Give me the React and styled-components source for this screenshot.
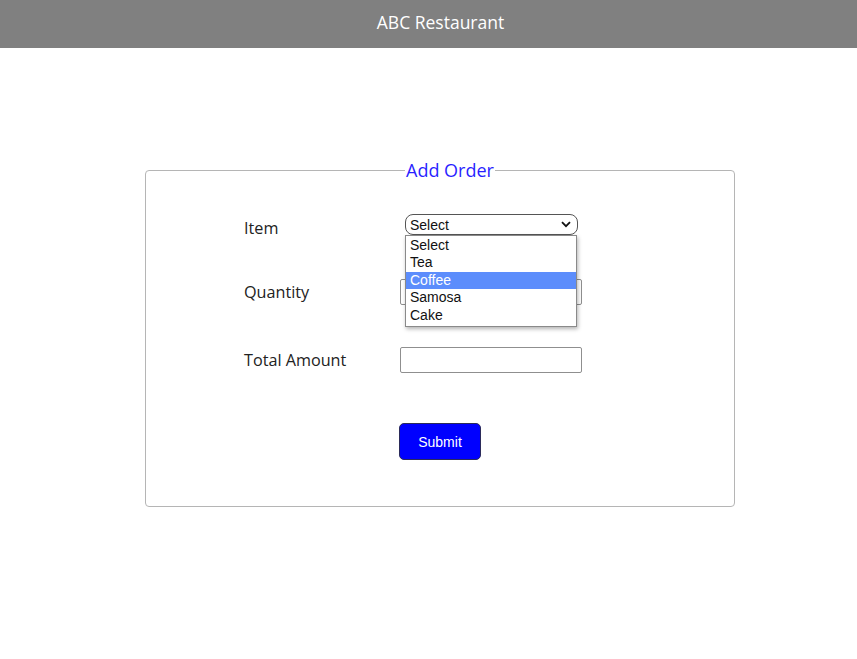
import React from "react";
import styled, { createGlobalStyle } from "styled-components";

const GlobalStyle = createGlobalStyle`
  html, body { margin: 0; padding: 0; background: #fff; }
  body { font-family: "Open Sans", "Noto Sans", sans-serif; }
`;

const Header = styled.header`
  height: 48px;
  box-sizing: border-box;
  background: #808080;
  color: #fff;
  display: flex;
  align-items: center;
  justify-content: center;
  padding: 0 0 5px 24px;
  font-size: 17.5px;
`;

const Main = styled.main`
  padding-top: 110px;
`;

const Fieldset = styled.fieldset`
  margin: 0 0 0 145px;
  width: 590px;
  box-sizing: border-box;
  border: 1px solid #b5b5b5;
  border-radius: 4px;
  padding: 0 0 46px 0;
`;

const Legend = styled.legend`
  margin-left: 259px;
  padding: 0 1px;
  color: #2a1fff;
  font-size: 18px;
  line-height: 24px;
`;

const FormGrid = styled.div`
  display: grid;
  grid-template-columns: 156px 190px;
  grid-template-rows: 26px 26px 26px 45px;
  row-gap: 42px;
  align-items: center;
  margin: 29px 0 0 98px;
`;

const Label = styled.label`
  font-size: 16.2px;
  color: #222;
  margin-top: ${(p) => p.$offset || 0}px;
`;

const Field = styled.div`
  position: relative;
  display: flex;
  align-items: center;
  height: 26px;
`;

const SelectBox = styled.div`
  box-sizing: border-box;
  margin-left: 5px;
  margin-top: 1px;
  width: 173px;
  height: 21px;
  border: 1px solid #555;
  border-radius: 8px;
  display: flex;
  align-items: center;
  justify-content: space-between;
  padding: 0 6px 0 4px;
  font-family: "Liberation Sans", Arial, sans-serif;
  font-size: 14px;
  color: #111;
`;

const DropList = styled.ul`
  position: absolute;
  top: 24px;
  left: 5px;
  width: 172px;
  box-sizing: border-box;
  margin: 0;
  padding: 1px 0 2px;
  list-style: none;
  background: #fff;
  border: 1px solid #8a8a8a;
  box-shadow: 1px 2px 4px rgba(0, 0, 0, 0.3);
  z-index: 5;
`;

const Option = styled.li`
  height: 17.4px;
  line-height: 17px;
  padding: 0 4px;
  font-family: "Liberation Sans", Arial, sans-serif;
  font-size: 14px;
  color: ${(p) => (p.$active ? "#fff" : "#111")};
  background: ${(p) => (p.$active ? "#5c8dfc" : "transparent")};
`;

const TextInput = styled.input`
  box-sizing: border-box;
  width: 182px;
  height: 26px;
  border: 1px solid #8f8f8f;
  border-radius: 2px;
  padding: 0 4px;
  font-family: "Liberation Sans", Arial, sans-serif;
  font-size: 14px;
  outline: none;
`;

const ButtonRow = styled.div`
  grid-column: 2;
  align-self: end;
  height: 37px;
`;

const SubmitButton = styled.button`
  width: 82px;
  height: 37px;
  background: #0000ff;
  color: #fff;
  border: 1px solid #2b2b5a;
  border-radius: 5px;
  font-family: "Liberation Sans", Arial, sans-serif;
  font-size: 14px;
  margin-left: -1px;
  cursor: pointer;
`;

const options = ["Select", "Tea", "Coffee", "Samosa", "Cake"];

export default function App() {
  return (
    <>
      <GlobalStyle />
      <Header>ABC Restaurant</Header>
      <Main>
        <Fieldset>
          <Legend>Add Order</Legend>
          <FormGrid>
            <Label $offset={7}>Item</Label>
            <Field>
              <SelectBox>
                <span>Select</span>
                <svg width="10" height="7" viewBox="0 0 10 7">
                  <path d="M1 1.2 L5 5.2 L9 1.2" fill="none" stroke="#111" strokeWidth="1.8" />
                </svg>
              </SelectBox>
              <DropList>
                {options.map((o) => (
                  <Option key={o} $active={o === "Coffee"}>{o}</Option>
                ))}
              </DropList>
            </Field>
            <Label>Quantity</Label>
            <Field>
              <TextInput type="text" />
            </Field>
            <Label>Total Amount</Label>
            <Field>
              <TextInput type="text" />
            </Field>
            <ButtonRow>
              <SubmitButton type="button">Submit</SubmitButton>
            </ButtonRow>
          </FormGrid>
        </Fieldset>
      </Main>
    </>
  );
}
